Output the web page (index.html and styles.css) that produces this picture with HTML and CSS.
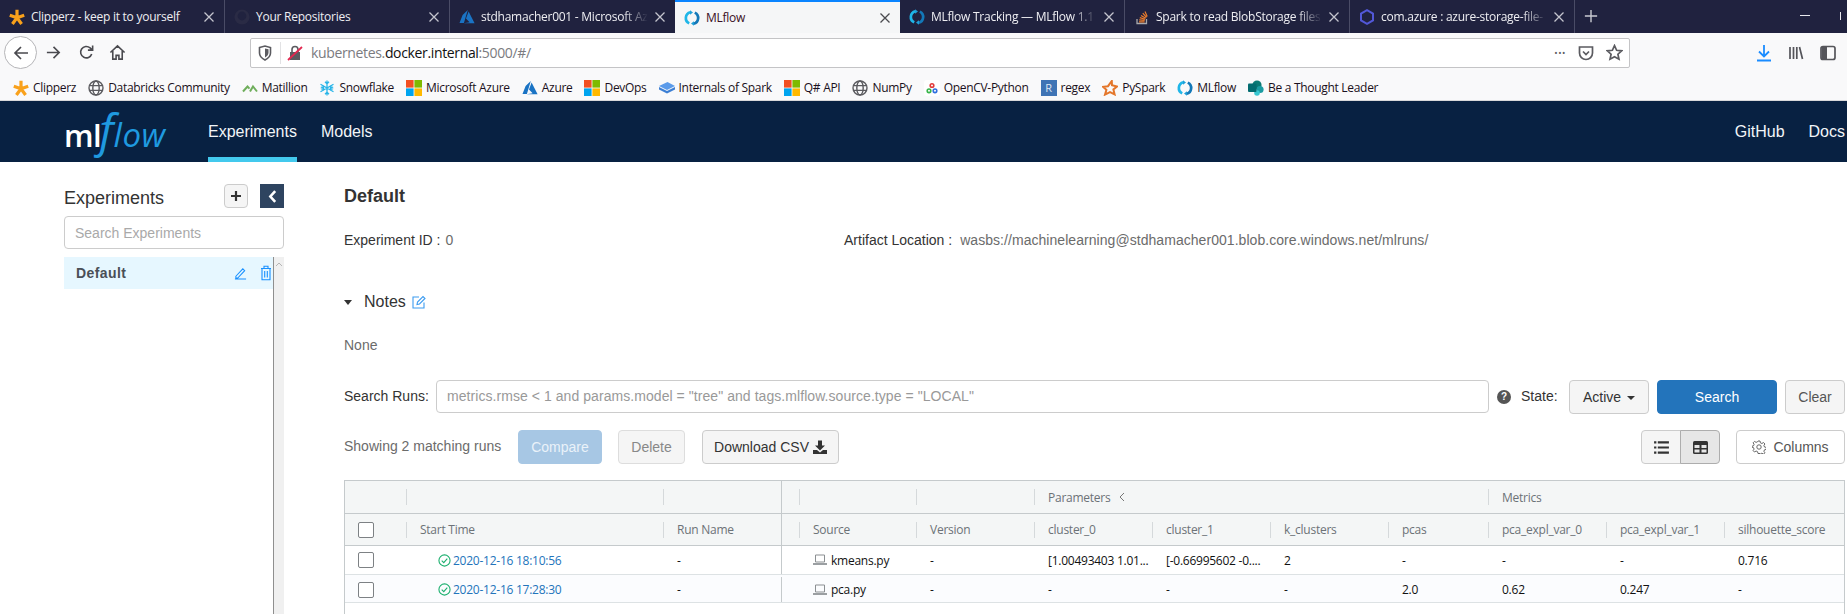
FILE: index.html
```html
<!DOCTYPE html>
<html>
<head>
<meta charset="UTF-8">
<title>MLflow</title>
<link rel="stylesheet" href="styles.css">
</head>
<body>
<svg class="defs" aria-hidden="true">
  <symbol id="i-close" viewBox="0 0 12 12"><path d="M1.5 1.5l9 9M10.5 1.5l-9 9" fill="none" stroke="currentColor" stroke-width="1.3"/></symbol>
  <symbol id="i-star" viewBox="0 0 16 16"><path d="M8 8.800V.8M8 8.800L15.200 6.200M8 8.800L12.600 15M8 8.800L3.400 15M8 8.800L.8 6.200" fill="none" stroke="#f9a11b" stroke-width="3.200"/></symbol>
  <symbol id="i-azure" viewBox="0 0 16 16"><path d="M8.8 1L3.6 6 0.5 14h4.4zM9.6 2.4L7 9.4l3.6 3.8L4.6 14.2h11z" fill="#1a73c4"/></symbol>
  <symbol id="i-spin" viewBox="0 0 16 16"><g fill="none" stroke-width="2.7"><path d="M5.2 13.4A6 6 0 0 1 6.4 2.2" stroke="#1fb6e8"/><path d="M10.8 2.6A6 6 0 0 1 9.6 13.8" stroke="#1378b8"/></g><path d="M6 .2v4.6l3-2.3zM10 15.8v-4.6l-3 2.3z" fill="#1fa0d8"/></symbol>
  <symbol id="i-so" viewBox="0 0 16 16"><path d="M3 10v4.5h9.5V10" fill="none" stroke="#a8a9ac" stroke-width="1.3"/><path d="M5 12.8h5.6M5.2 10.8l5.5.6M5.8 8.6l5.3 1.6M7 6.4l4.7 2.8M8.8 4.2l3.7 4.1M11 2.4l2.2 5" fill="none" stroke="#ee7d2b" stroke-width="1.2"/></symbol>
  <symbol id="i-hex" viewBox="0 0 16 16"><path d="M8 1.2l6 3.4v6.8l-6 3.4-6-3.4V4.6z" fill="none" stroke="#5258d8" stroke-width="2"/></symbol>
  <symbol id="i-github" viewBox="0 0 16 16"><circle cx="8" cy="8" r="7.5" fill="#2a2b45"/><circle cx="8" cy="7" r="4.4" fill="#20223f"/></symbol>
  <symbol id="i-globe" viewBox="0 0 16 16"><g fill="none" stroke="#5b5b5f" stroke-width="1.4"><circle cx="8" cy="8" r="7"/><ellipse cx="8" cy="8" rx="3.2" ry="7"/><path d="M1.4 5.6h13.2M1.4 10.4h13.2"/></g></symbol>
  <symbol id="i-matillion" viewBox="0 0 16 16"><path d="M1 11.5l4.5-5 2 2.2M8 11.5L11 6.5l4 5" fill="none" stroke="#6fae5b" stroke-width="2"/></symbol>
  <symbol id="i-snow" viewBox="0 0 16 16"><path d="M8 .5v15M1.5 4.2l13 7.6M14.5 4.2l-13 7.6M6 1.8l2 2 2-2M6 14.2l2-2 2 2M1.8 7l2.6.9-.6-2.8M14.2 9l-2.6-.9.6 2.8M1.8 9l2.6-.9-.6 2.8M14.2 7l-2.6.9.6-2.8" fill="none" stroke="#29b5e8" stroke-width="1.3"/></symbol>
  <symbol id="i-ms" viewBox="0 0 16 16"><rect width="7.6" height="7.6" fill="#f25022"/><rect x="8.4" width="7.6" height="7.6" fill="#7fba00"/><rect y="8.4" width="7.6" height="7.6" fill="#00a4ef"/><rect x="8.4" y="8.4" width="7.6" height="7.6" fill="#ffb900"/></symbol>
  <symbol id="i-book" viewBox="0 0 16 16"><path d="M8.5 2L16 6 8 10 0 6z" fill="#5b9bea"/><path d="M0 7l8 4 8-4v2.5L8 13.5 0 9.5z" fill="#3d7fd4"/></symbol>
  <symbol id="i-opencv" viewBox="0 0 16 16"><rect width="16" height="16" rx="3" fill="#fff"/><g fill="none" stroke-width="1.600"><circle cx="8" cy="5.500" r="1.800" stroke="#e23b3b"/><circle cx="5" cy="10.800" r="1.800" stroke="#38b54a"/><circle cx="11" cy="10.800" r="1.800" stroke="#2f6fe0"/></g></symbol>
  <symbol id="i-pyspark" viewBox="0 0 16 16"><path d="M9.8 1L10 5.2l5 1.4-3.6 2.8 1.2 5-4.6-2.2-5 2.4 1.4-4.8L1 6.8l5-.6z" fill="none" stroke="#e4772b" stroke-width="2"/></symbol>
  <symbol id="i-sp" viewBox="0 0 16 16"><circle cx="9" cy="5" r="4.6" fill="#0b7a75"/><circle cx="12" cy="9.5" r="3.6" fill="#1a9ba1"/><circle cx="9" cy="13" r="2.8" fill="#37c6d0"/><rect x="0" y="3.5" width="8.5" height="8.5" rx="1" fill="#036c70"/></symbol>
  <symbol id="i-pencil" viewBox="0 0 14 14"><path d="M2 10.5L9.5 2.5l2 2-7.5 8H2zM1 13.4h12" fill="none" stroke="currentColor" stroke-width="1.1"/></symbol>
  <symbol id="i-trash" viewBox="0 0 12 16"><path d="M1 3.5h10M4 3.3V1.2h4v2.1M2 3.5v11.3h8V3.5M4.7 6v6.5M7.3 6v6.5" fill="none" stroke="currentColor" stroke-width="1.1"/></symbol>
  <symbol id="i-laptop" viewBox="0 0 14 12"><path d="M2.5 1h9v7h-9z" fill="none" stroke="#8b8f92"/><rect y="9" width="14" height="2" fill="#9b9fa2"/></symbol>
  <symbol id="i-check" viewBox="0 0 14 14"><circle cx="7" cy="7" r="6" fill="none" stroke="#1db06f" stroke-width="1.2"/><path d="M4 7.2l2.2 2.2L10 5" fill="none" stroke="#1db06f" stroke-width="1.2"/></symbol>
</svg>

<div class="tabstrip">
  <div class="tab"><svg class="fav"><use href="#i-star"/></svg><span class="tab-title">Clipperz - keep it to yourself</span><svg class="tab-x"><use href="#i-close"/></svg></div>
  <div class="tab"><svg class="fav"><use href="#i-github"/></svg><span class="tab-title">Your Repositories</span><svg class="tab-x"><use href="#i-close"/></svg></div>
  <div class="tab tab-noline"><svg class="fav"><use href="#i-azure"/></svg><span class="tab-title tab-fade">stdhamacher001 - Microsoft Az</span><svg class="tab-x"><use href="#i-close"/></svg></div>
  <div class="tab tab-active"><svg class="fav"><use href="#i-spin"/></svg><span class="tab-title">MLflow</span><svg class="tab-x"><use href="#i-close"/></svg></div>
  <div class="tab"><svg class="fav"><use href="#i-spin"/></svg><span class="tab-title tab-fade">MLflow Tracking — MLflow 1.1</span><svg class="tab-x"><use href="#i-close"/></svg></div>
  <div class="tab"><svg class="fav"><use href="#i-so"/></svg><span class="tab-title tab-fade">Spark to read BlobStorage files</span><svg class="tab-x"><use href="#i-close"/></svg></div>
  <div class="tab"><svg class="fav"><use href="#i-hex"/></svg><span class="tab-title tab-fade">com.azure : azure-storage-file-</span><svg class="tab-x"><use href="#i-close"/></svg></div>
  <svg class="tab-new" viewBox="0 0 16 16"><path d="M8 1v14M1 8h14" fill="none" stroke="#c9cad2" stroke-width="1.6"/></svg>
  <span class="win-min"></span>
  <span class="win-max"></span>
</div>

<div class="toolbar">
  <span class="back-btn"><svg viewBox="0 0 18 18"><path d="M16 9H3M9 3L3 9l6 6" fill="none" stroke="#4a4a4f" stroke-width="1.7"/></svg></span>
  <svg class="tool-icon tool-forward" viewBox="0 0 18 18"><path d="M2 9h13M9 3l6 6-6 6" fill="none" stroke="#4a4a4f" stroke-width="1.7"/></svg>
  <svg class="tool-icon tool-reload" viewBox="0 0 18 18"><path d="M14.5 10.5A6 6 0 1 1 12.8 4.2L15 6.2M15.5 1.5v5h-5" fill="none" stroke="#4a4a4f" stroke-width="1.7"/></svg>
  <svg class="tool-icon tool-home" viewBox="0 0 18 18"><path d="M1.5 9L9 2l7.5 7M4 7.5V16h3.5v-4h3v4H14V7.5" fill="none" stroke="#4a4a4f" stroke-width="1.7"/></svg>
  <div class="urlbar">
    <svg class="url-shield" viewBox="0 0 14 16"><path d="M1.5 2.5L7 1l5.5 1.5V8c0 3-2.5 5.5-5.5 7-3-1.5-5.500-4-5.500-7z" fill="none" stroke="#5b5b60" stroke-width="1.6"/><path d="M7 3.500v9c2-1 3.500-3 3.500-5V4.300z" fill="#5b5b60"/></svg>
    <span class="url-sep"></span>
    <svg class="url-lock" viewBox="0 0 16 16"><rect x="3" y="7" width="10" height="8" fill="#5b5b60"/><path d="M5 7V4.500a3 3 0 0 1 6 0V7" fill="none" stroke="#5b5b60" stroke-width="1.6"/><path d="M1 15L15 2" stroke="#e22850" stroke-width="1.8"/></svg>
    <span class="url-text">kubernetes.<b>docker.internal</b>:5000/#/</span>
    <span class="url-dots">•••</span>
    <svg class="url-pocket" viewBox="0 0 16 16"><path d="M1.500 2h13v6a6.500 6.500 0 0 1-13 0z" fill="none" stroke="#5b5b60" stroke-width="1.7"/><path d="M5 6.500l3 3 3-3" fill="none" stroke="#5b5b60" stroke-width="1.7"/></svg>
    <svg class="url-star" viewBox="0 0 16 16"><path d="M8 1.500l2 4.400 4.700.5-3.500 3.200 1 4.700L8 11.900l-4.200 2.400 1-4.700L1.300 6.400 6 5.900z" fill="none" stroke="#5b5b60" stroke-width="1.6"/></svg>
  </div>
  <svg class="tool-right tool-download" viewBox="0 0 16 18"><path d="M8 1v11M3 7.500L8 12.500l5-5M1 16.500h14" fill="none" stroke="#1a8cff" stroke-width="1.8"/></svg>
  <svg class="tool-right" viewBox="0 0 16 18"><path d="M2 3v12M5.500 3v12M8.800 3v12M11.500 3l3 12" fill="none" stroke="#55555a" stroke-width="1.7"/></svg>
  <svg class="tool-right" viewBox="0 0 16 18"><rect x="1" y="2.500" width="14" height="13" rx="2" fill="none" stroke="#55555a" stroke-width="1.700"/><rect x="1.500" y="3" width="5.500" height="12" fill="#55555a"/></svg>
</div>

<div class="bookmarks">
  <span class="bm"><svg><use href="#i-star"/></svg>Clipperz</span>
  <span class="bm"><svg><use href="#i-globe"/></svg>Databricks Community</span>
  <span class="bm"><svg><use href="#i-matillion"/></svg>Matillion</span>
  <span class="bm"><svg><use href="#i-snow"/></svg>Snowflake</span>
  <span class="bm"><svg><use href="#i-ms"/></svg>Microsoft Azure</span>
  <span class="bm"><svg><use href="#i-azure"/></svg>Azure</span>
  <span class="bm"><svg><use href="#i-ms"/></svg>DevOps</span>
  <span class="bm"><svg><use href="#i-book"/></svg>Internals of Spark</span>
  <span class="bm"><svg><use href="#i-ms"/></svg>Q# API</span>
  <span class="bm"><svg><use href="#i-globe"/></svg>NumPy</span>
  <span class="bm"><svg><use href="#i-opencv"/></svg>OpenCV-Python</span>
  <span class="bm"><i class="bm-r">R</i>regex</span>
  <span class="bm"><svg><use href="#i-pyspark"/></svg>PySpark</span>
  <span class="bm"><svg><use href="#i-spin"/></svg>MLflow</span>
  <span class="bm"><svg><use href="#i-sp"/></svg>Be a Thought Leader</span>
</div>

<nav class="navbar">
  <div class="logo"><span class="logo-ml">ml</span><span class="logo-f">f</span><span class="logo-low">low</span></div>
  <a class="nav-link nav-active">Experiments</a>
  <a class="nav-link">Models</a>
  <span class="nav-space"></span>
  <a class="nav-link">GitHub</a>
  <a class="nav-link nav-last">Docs</a>
</nav>

<div class="content">
  <aside class="sidebar">
    <div class="side-head">
      <span class="side-title">Experiments</span>
      <button class="btn-plus"><svg viewBox="0 0 12 12"><path d="M6 1v10M1 6h10" stroke="#333" stroke-width="2.200"/></svg></button>
      <button class="btn-collapse"><svg viewBox="0 0 10 14"><path d="M7.500 2L3 7l4.500 5" fill="none" stroke="#fff" stroke-width="2.400"/></svg></button>
    </div>
    <div class="side-search">Search Experiments</div>
    <div class="side-list">
      <div class="side-items">
        <div class="side-item">
          <span class="side-name">Default</span>
          <svg class="side-edit"><use href="#i-pencil"/></svg>
          <svg class="side-del"><use href="#i-trash"/></svg>
        </div>
      </div>
      <div class="scrollbar"><svg viewBox="0 0 8 5"><path d="M1 4l3-3 3 3" fill="none" stroke="#b5b5b5"/></svg></div>
    </div>
  </aside>

  <main class="main">
    <h1 class="exp-title">Default</h1>
    <div class="meta">
      <div class="meta-item"><span class="meta-label meta-id">Experiment ID :</span><span class="meta-value">0</span></div>
      <div class="meta-item"><span class="meta-label">Artifact Location :</span><span class="meta-value">wasbs://machinelearning@stdhamacher001.blob.core.windows.net/mlruns/</span></div>
    </div>
    <div class="notes">
      <span class="caret-down"></span>
      <span class="notes-title">Notes</span>
      <svg class="notes-edit" viewBox="0 0 14 14"><path d="M12 7.500V13H1V2h6" fill="none" stroke="#3c9cf0" stroke-width="1.100"/><path d="M5 9.500l.5-2.500L11 1.500l2 2L7.500 9z" fill="none" stroke="#3c9cf0" stroke-width="1.100"/></svg>
    </div>
    <div class="notes-body">None</div>

    <div class="search-row">
      <label class="search-label">Search Runs:</label>
      <div class="search-input">metrics.rmse &lt; 1 and params.model = "tree" and tags.mlflow.source.type = "LOCAL"</div>
      <span class="help">?</span>
      <label class="state-label">State:</label>
      <button class="btn btn-active">Active <span class="caret"></span></button>
      <button class="btn btn-primary">Search</button>
      <button class="btn btn-clear">Clear</button>
    </div>

    <div class="action-row">
      <span class="run-count">Showing 2 matching runs</span>
      <button class="btn btn-compare">Compare</button>
      <button class="btn btn-delete">Delete</button>
      <button class="btn btn-csv">Download CSV <svg viewBox="0 0 14 14"><path d="M5 .5h4v5h3L7 10.500 2 5.500h3z" fill="#333"/><path d="M0 10h4l3 2.500L10 10h4v4H0z" fill="#333"/></svg></button>
      <span class="action-space"></span>
      <div class="view-toggle">
        <button class="toggle"><svg viewBox="0 0 16 14"><path d="M0 1.500h2.500M4 1.500h12M0 7h2.500M4 7h12M0 12.500h2.500M4 12.500h12" stroke="#333" stroke-width="2.400"/></svg></button>
        <button class="toggle toggle-on"><svg viewBox="0 0 15 13"><rect width="15" height="13" rx="1.500" fill="#333"/><path d="M1.500 4h5v3h-5zM8.500 4h5v3h-5zM1.500 8.500h5v3h-5zM8.500 8.500h5v3h-5z" fill="#e6e6e6"/></svg></button>
      </div>
      <button class="btn btn-columns"><svg viewBox="0 0 14 14"><circle cx="7" cy="7" r="2.200" fill="none" stroke="#666"/><path d="M6 1h2l.4 1.800 1.500.7 1.600-1 1.400 1.500-1 1.500.6 1.500 1.800.4v2l-1.800.4-.6 1.500 1 1.500-1.400 1.400-1.600-1-1.500.7L8 13.500H6l-.4-1.800-1.500-.7-1.600 1L1.100 10.600l1-1.500-.6-1.500L0 7.200v-1l1.500-.4.600-1.500-1-1.500L2.500 1.400l1.600 1 1.500-.7z" fill="none" stroke="#666"/></svg>Columns</button>
    </div>

    <div class="grid">
      <div class="g-row g-head1">
        <div class="g-cell g-sep"></div><div class="g-cell g-sep"></div><div class="g-cell g-split"></div><div class="g-cell g-sep"></div><div class="g-cell g-sep"></div><div class="g-cell g-sep"></div>
        <div class="g-cell g-sep g-wide"><span>Parameters</span><svg class="g-chev" viewBox="0 0 8 10"><path d="M6 1L2 5l4 4" fill="none" stroke="#777"/></svg></div>
        <div class="g-cell g-wide2">Metrics</div>
      </div>
      <div class="g-row g-head2">
        <div class="g-cell g-sep"><span class="check"></span></div>
        <div class="g-cell g-sep">Start Time</div>
        <div class="g-cell g-split">Run Name</div>
        <div class="g-cell g-sep"></div>
        <div class="g-cell g-sep">Source</div>
        <div class="g-cell g-sep">Version</div>
        <div class="g-cell g-sep">cluster_0</div>
        <div class="g-cell g-sep">cluster_1</div>
        <div class="g-cell g-sep">k_clusters</div>
        <div class="g-cell g-sep">pcas</div>
        <div class="g-cell g-sep">pca_expl_var_0</div>
        <div class="g-cell g-sep">pca_expl_var_1</div>
        <div class="g-cell">silhouette_score</div>
      </div>
      <div class="g-row g-data">
        <div class="g-cell"><span class="check"></span></div>
        <div class="g-cell g-time"><svg><use href="#i-check"/></svg><a>2020-12-16 18:10:56</a></div>
        <div class="g-cell g-split">-</div>
        <div class="g-cell"></div>
        <div class="g-cell"><svg class="laptop"><use href="#i-laptop"/></svg>kmeans.py</div>
        <div class="g-cell">-</div>
        <div class="g-cell">[1.00493403 1.01...</div>
        <div class="g-cell">[-0.66995602 -0....</div>
        <div class="g-cell">2</div>
        <div class="g-cell">-</div>
        <div class="g-cell">-</div>
        <div class="g-cell">-</div>
        <div class="g-cell">0.716</div>
      </div>
      <div class="g-row g-data g-alt">
        <div class="g-cell"><span class="check"></span></div>
        <div class="g-cell g-time"><svg><use href="#i-check"/></svg><a>2020-12-16 17:28:30</a></div>
        <div class="g-cell g-split">-</div>
        <div class="g-cell"></div>
        <div class="g-cell"><svg class="laptop"><use href="#i-laptop"/></svg>pca.py</div>
        <div class="g-cell">-</div>
        <div class="g-cell">-</div>
        <div class="g-cell">-</div>
        <div class="g-cell">-</div>
        <div class="g-cell">2.0</div>
        <div class="g-cell">0.62</div>
        <div class="g-cell">0.247</div>
        <div class="g-cell">-</div>
      </div>
    </div>
  </main>
</div>
</body>
</html>
```

FILE: styles.css
```css
* {
box-sizing: border-box;
}
html, body {
margin: 0;
height: 614px;
overflow: hidden;
}
body {
font-family: "Liberation Sans", Arial, sans-serif;
font-size: 14px;
color: #333;
background-color: #fff;
}
button {
font-family: inherit;
}
.defs {
position: absolute;
width: 0;
height: 0;
}

/* browser chrome */
.tabstrip {
display: flex;
align-items: stretch;
height: 33px;
background-color: #20223f;
font-family: "Open Sans", sans-serif;
font-size: 12px;
color: #eeeef2;
}
.tab {
flex: 0 0 225px;
min-width: 0;
display: flex;
align-items: center;
padding: 0 9px;
border-right: 1px solid #4a4c66;
}
.tab-noline {
border-right: none;
}
.tab-active {
background-color: #f5f6f7;
border-top: 2px solid #0a84ff;
border-right: none;
color: #3a0f24;
}
.fav {
flex: none;
width: 16px;
height: 16px;
margin-right: 6px;
}
.tab-title {
flex: 1;
min-width: 0;
white-space: nowrap;
letter-spacing: -0.25px;
}
.tab-fade {
-webkit-mask-image: linear-gradient(to right, #000 85%, transparent);
mask-image: linear-gradient(to right, #000 85%, transparent);
}
.tab-x {
flex: none;
width: 12px;
height: 12px;
margin-left: 6px;
color: #c4c5ce;
}
.tab-active .tab-x {
color: #4a4a4f;
}
.tab-new {
width: 14px;
height: 14px;
margin: 9px 0 0 9px;
}
.win-min {
width: 10px;
height: 1px;
margin: 15px 0 0 202px;
background-color: #e8e8ee;
}
.win-max {
width: 1px;
height: 8px;
margin: 12px 0 0 30px;
background-color: #e8e8ee;
}

.toolbar {
display: flex;
align-items: center;
height: 39px;
padding-left: 4px;
background-color: #f9f9fa;
}
.back-btn {
display: flex;
align-items: center;
justify-content: center;
width: 33px;
height: 33px;
border: 1px solid #b5b5b8;
border-radius: 50%;
background-color: #fff;
}
.back-btn svg {
width: 18px;
height: 18px;
}
.tool-icon {
width: 17px;
height: 17px;
}
.tool-forward {
margin-left: 8px;
}
.tool-reload {
margin-left: 16px;
}
.tool-home {
margin-left: 14px;
}
.urlbar {
display: flex;
align-items: center;
width: 1380px;
height: 30px;
margin-left: 124px;
padding: 0 6px 0 7px;
background-color: #fff;
border: 1px solid #c4c4c6;
border-radius: 2px;
font-family: "Open Sans", sans-serif;
font-size: 14px;
color: #7b7b80;
}
.url-shield {
width: 14px;
height: 16px;
}
.url-sep {
width: 1px;
height: 22px;
margin: 0 6px 0 8px;
background-color: #e2e2e4;
}
.url-lock {
width: 16px;
height: 16px;
}
.url-text {
flex: 1;
margin-left: 8px;
letter-spacing: -0.35px;
}
.url-text b {
font-weight: normal;
color: #111;
}
.url-dots {
font-size: 9px;
letter-spacing: 0.5px;
color: #5b5b60;
}
.url-pocket {
width: 16px;
height: 16px;
margin-left: 12px;
}
.url-star {
width: 17px;
height: 17px;
margin-left: 12px;
}
.tool-right {
width: 16px;
height: 18px;
margin-left: 16px;
}
.tool-download {
margin-left: 126px;
}

.bookmarks {
display: flex;
align-items: center;
gap: 12px;
height: 29px;
padding: 3px 0 0 13px;
background-color: #f9f9fa;
border-bottom: 1px solid #d8d8da;
font-family: "Open Sans", sans-serif;
font-size: 12px;
letter-spacing: -0.3px;
color: #1a1020;
}
.bm {
display: flex;
align-items: center;
gap: 4px;
white-space: nowrap;
}
.bm svg {
flex: none;
width: 16px;
height: 16px;
}
.bm-r {
flex: none;
width: 16px;
height: 16px;
background-color: #3f74b5;
color: #dfe8f4;
font-style: normal;
font-size: 11px;
line-height: 16px;
text-align: center;
}

/* mlflow navbar */
.navbar {
display: flex;
align-items: stretch;
height: 61px;
padding: 0 2px 0 64px;
background-color: #082142;
}
.logo {
display: flex;
align-items: baseline;
width: 144px;
padding-top: 5px;
font-family: "Open Sans", sans-serif;
line-height: 1;
}
.logo-ml {
color: #fff;
font-weight: 600;
letter-spacing: -0.5px;
font-size: 31px;
}
.logo-f {
color: #1f9ae0;
font-style: italic;
font-size: 46px;
margin-left: -2px;
}
.logo-low {
color: #1f9ae0;
font-style: italic;
font-size: 33px;
letter-spacing: 0.5px;
margin-left: 0;
}
.nav-link {
display: flex;
align-items: center;
margin-right: 24px;
border-bottom: 5px solid transparent;
padding-top: 5px;
color: #f2f5f8;
font-size: 16px;
}
.nav-last {
margin-right: 0;
}
.nav-active {
border-bottom-color: #43c9ed;
}
.nav-space {
flex: 1;
}

/* page */
.content {
display: flex;
padding-left: 64px;
}
.sidebar {
width: 220px;
padding-top: 22px;
}
.side-head {
display: flex;
align-items: center;
height: 24px;
}
.side-title {
flex: 1;
margin-top: 5px;
font-size: 18px;
}
.btn-plus {
display: flex;
align-items: center;
justify-content: center;
width: 24px;
height: 24px;
padding: 0;
border: 1px solid #ccc;
border-radius: 4px;
background-color: #f5f5f5;
}
.btn-plus svg {
width: 12px;
height: 12px;
}
.btn-collapse {
display: flex;
align-items: center;
justify-content: center;
width: 24px;
height: 24px;
margin-left: 12px;
padding: 0;
border: none;
background-color: #2e4460;
}
.btn-collapse svg {
width: 11px;
height: 15px;
}
.side-search {
height: 33px;
margin-top: 8px;
padding: 0 10px;
border: 1px solid #ccc;
border-radius: 4px;
line-height: 32px;
color: #a9a9a9;
}
.side-list {
display: flex;
height: 357px;
margin-top: 8px;
}
.side-items {
flex: 1;
}
.side-item {
display: flex;
align-items: center;
height: 32px;
padding-left: 12px;
background-color: #e6f7ff;
}
.side-name {
flex: 1;
font-weight: bold;
letter-spacing: 0.4px;
color: #4a4f57;
}
.side-edit {
width: 13px;
height: 14px;
color: #1890ff;
}
.side-del {
width: 12px;
height: 16px;
margin: 0 1px 0 13px;
color: #1890ff;
}
.scrollbar {
width: 11px;
padding-top: 5px;
background-color: #f0f0f0;
border-left: 1px solid #8f8f8f;
}
.scrollbar svg {
display: block;
width: 8px;
height: 5px;
margin-left: 1px;
}

.main {
width: 1501px;
margin-left: 60px;
padding-top: 24px;
}
.exp-title {
margin: 0;
font-size: 18px;
line-height: 20px;
}
.meta {
display: flex;
margin-top: 24px;
line-height: 20px;
}
.meta-item {
width: 500px;
flex: none;
white-space: nowrap;
}
.meta-label {
margin-right: 8px;
}
.meta-id {
margin-right: 5px;
}
.meta-value {
color: #6b6b6b;
letter-spacing: 0.05px;
}
.notes {
display: flex;
align-items: center;
height: 20px;
margin-top: 42px;
}
.caret-down {
width: 0;
height: 0;
border-left: 4px solid transparent;
border-right: 4px solid transparent;
border-top: 5px solid #333;
}
.notes-title {
margin-left: 12px;
font-size: 16px;
}
.notes-edit {
width: 14px;
height: 14px;
margin-left: 6px;
}
.notes-body {
margin-top: 23px;
line-height: 20px;
color: #6b6b6b;
}

.btn {
height: 34px;
padding: 0;
border: 1px solid #ccc;
border-radius: 4px;
background-color: #f5f5f5;
font-size: 14px;
color: #333;
}
.search-row {
display: flex;
align-items: flex-start;
margin-top: 25px;
}
.search-label {
width: 92px;
line-height: 33px;
}
.search-input {
width: 1053px;
height: 33px;
padding: 0 10px;
border: 1px solid #ccc;
border-radius: 4px;
line-height: 31px;
letter-spacing: 0.06px;
color: #999;
}
.help {
width: 14px;
height: 14px;
margin: 10px 0 0 8px;
border-radius: 50%;
background-color: #555;
color: #fff;
font-size: 10px;
font-weight: bold;
line-height: 14px;
text-align: center;
}
.state-label {
width: 48px;
margin-left: 10px;
line-height: 32px;
}
.btn-active {
width: 80px;
}
.caret {
display: inline-block;
width: 0;
height: 0;
margin-left: 2px;
vertical-align: middle;
border-left: 4px solid transparent;
border-right: 4px solid transparent;
border-top: 4px solid #333;
}
.btn-primary {
width: 120px;
margin-left: 8px;
background-color: #2374bb;
border-color: #2374bb;
color: #fff;
}
.btn-clear {
width: 60px;
margin-left: 8px;
color: #555;
}
.action-row {
display: flex;
align-items: center;
margin-top: 16px;
}
.run-count {
width: 174px;
margin-top: -2px;
color: #6b6b6b;
}
.btn-compare {
width: 84px;
background-color: #a7c7e4;
border-color: #a7c7e4;
color: #eaf2f9;
}
.btn-delete {
width: 67px;
margin-left: 16px;
border-color: #ddd;
color: #888;
}
.btn-csv {
width: 137px;
margin-left: 17px;
}
.btn-csv svg {
width: 14px;
height: 14px;
vertical-align: -2px;
}
.action-space {
flex: 1;
}
.view-toggle {
display: flex;
}
.toggle {
display: flex;
align-items: center;
justify-content: center;
width: 40px;
height: 34px;
padding: 0;
border: 1px solid #ccc;
background-color: #f5f5f5;
border-radius: 4px 0 0 4px;
}
.toggle svg {
width: 15px;
height: 13px;
}
.toggle-on {
margin-left: -1px;
background-color: #e6e6e6;
border-color: #adadad;
border-radius: 0 4px 4px 0;
}
.btn-columns {
display: flex;
align-items: center;
justify-content: center;
gap: 7px;
width: 109px;
margin-left: 16px;
background-color: #fff;
color: #555;
}
.btn-columns svg {
width: 14px;
height: 14px;
}

/* runs table */
.grid {
height: 134px;
margin-top: 16px;
border: 1px solid #c5cacc;
border-bottom: none;
font-family: "Open Sans", sans-serif;
font-size: 12px;
letter-spacing: -0.25px;
color: #111;
}
.g-row {
display: grid;
grid-template-columns: 62px 257px 118px 18px 117px 118px 118px 118px 118px 100px 118px 118px 1fr;
}
.g-head1 {
height: 33px;
background-color: #f4f6f6;
border-bottom: 1px solid #c5cacc;
color: #6c7277;
}
.g-head2 {
height: 32px;
background-color: #f4f6f6;
border-bottom: 1px solid #c5cacc;
color: #6c7277;
}
.g-data {
height: 29px;
border-bottom: 1px solid #dde2e4;
}
.g-alt {
height: 28px;
padding-top: 2px;
background-color: #fbfcfe;
}
.g-cell {
display: flex;
align-items: center;
min-width: 0;
padding-left: 13px;
white-space: nowrap;
overflow: hidden;
}
.g-sep {
background: linear-gradient(#d5d9db, #d5d9db) right center / 1px 16px no-repeat;
}
.g-split {
border-right: 1px solid #c5cacc;
}
.g-wide {
grid-column: span 4;
}
.g-wide2 {
grid-column: span 3;
}
.g-chev {
width: 8px;
height: 10px;
margin-left: 8px;
}
.check {
width: 16px;
height: 16px;
border: 1px solid #7d8184;
border-radius: 2px;
background-color: #fff;
}
.g-time {
padding-left: 31px;
}
.g-time svg {
flex: none;
width: 13px;
height: 13px;
margin-right: 2px;
}
.g-time a {
color: #2374bb;
}
.laptop {
flex: none;
width: 14px;
height: 12px;
margin-right: 4px;
}
```
